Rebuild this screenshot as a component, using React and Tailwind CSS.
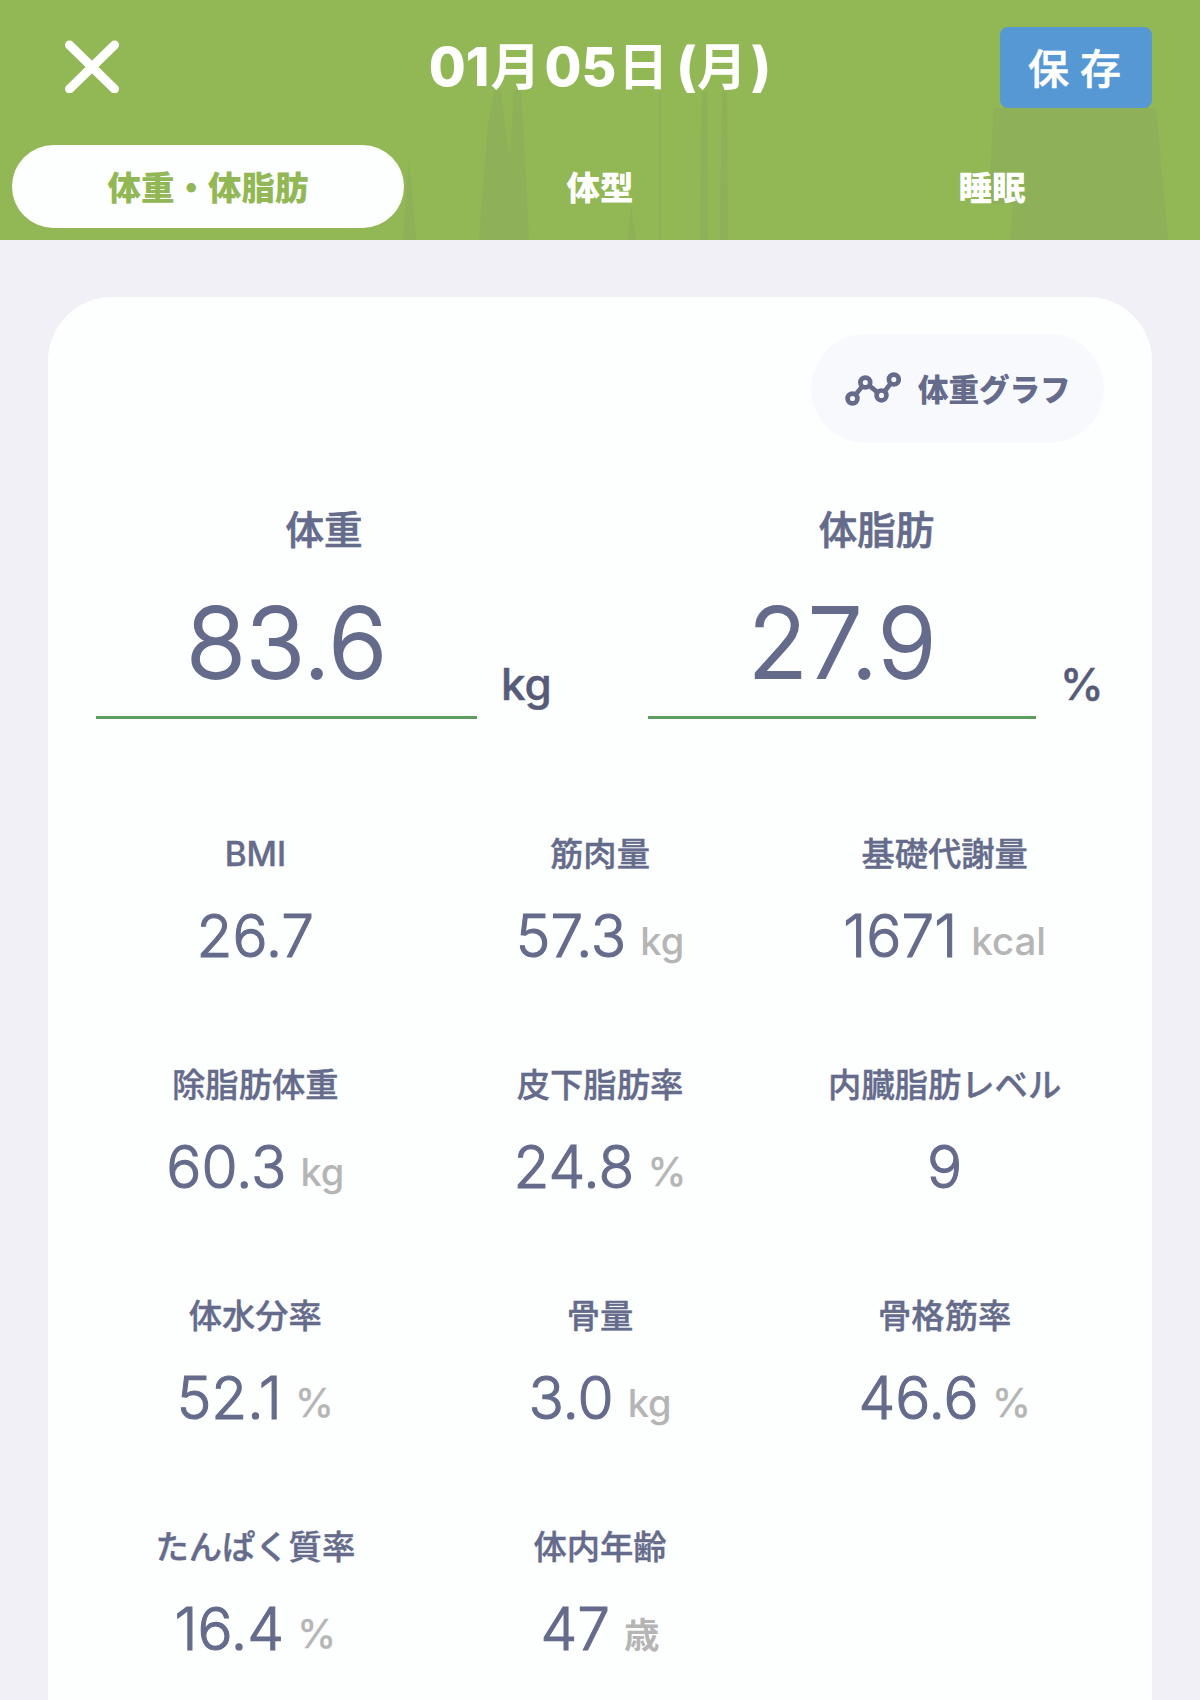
const metrics = [
  { label: "BMI", value: "26.7" },
  { label: "筋肉量", value: "57.3", unit: "kg" },
  { label: "基礎代謝量", value: "1671", unit: "kcal" },
  { label: "除脂肪体重", value: "60.3", unit: "kg" },
  { label: "皮下脂肪率", value: "24.8", unit: "%" },
  { label: "内臓脂肪レベル", value: "9" },
  { label: "体水分率", value: "52.1", unit: "%" },
  { label: "骨量", value: "3.0", unit: "kg" },
  { label: "骨格筋率", value: "46.6", unit: "%" },
  { label: "たんぱく質率", value: "16.4", unit: "%" },
  { label: "体内年齢", value: "47", unit: "歳" },
]

const tabs = ["体重・体脂肪", "体型", "睡眠"]

const unitStyles = {
  kg: "text-[38px] font-medium",
  kcal: "text-[38.5px] font-medium",
  "%": "text-[40px] font-normal [-webkit-text-stroke:0.4px] -ml-px",
  歳: "text-[35.5px] font-bold",
}

function CloseIcon() {
  return (
    <svg width="56" height="54" viewBox="0 0 56 54" fill="none" stroke="#fff" strokeWidth="9" strokeLinecap="round">
      <path d="M4.5 6 49.5 50M49.5 6 4.5 50" />
    </svg>
  )
}

function GraphIcon() {
  return (
    <svg width="56" height="34" viewBox="0 0 56 34" fill="none" stroke="#656b8b" strokeWidth="4.7">
      <circle cx="7.5" cy="26.5" r="4.9" />
      <circle cx="20.3" cy="10.5" r="4.9" />
      <circle cx="36.5" cy="23.4" r="4.9" />
      <circle cx="48.8" cy="7.5" r="4.9" />
      <path d="M10.6 22.6 17.2 14.4M24.2 13.6 32.6 20.3M39.6 19.5 45.7 11.4" />
    </svg>
  )
}

function HeaderTexture() {
  return (
    <svg className="absolute inset-0" width="1200" height="240" fill="#7f9c66" fillOpacity="0.25">
      <path d="M495 90 488 125 479 240H529L521 90H514L510 160 500 90Z" />
      <path d="M409 158 403 240H416ZM631 205 628 240H636ZM659 92H661V240H659ZM702 92H707L708 240H700ZM722 92H727L728 240H720Z" />
      <path d="M994 108H1156L1168 240H1010L1013 204H988Z" />
    </svg>
  )
}

function Header() {
  return (
    <header className="relative h-[240px] bg-[#92b755] text-white">
      <HeaderTexture />
      <div className="relative grid h-[145px] grid-cols-[1fr_auto_1fr] items-start px-12">
        <button className="mt-[39px] ml-[17px] justify-self-start">
          <CloseIcon />
        </button>
        <h1 className="mt-[35px] flex text-[53.5px] leading-[64px] font-extrabold whitespace-nowrap">
          <span>01</span>
          <span className="ml-px text-[50px] font-bold">月</span>
          <span className="ml-1">05</span>
          <span className="ml-0.5 text-[50px] font-bold">日</span>
          <span className="ml-2">(</span>
          <span className="text-[50px] font-bold">月</span>
          <span className="ml-1">)</span>
        </h1>
        <button className="mt-[27px] h-[81px] w-[152px] justify-self-end rounded-lg bg-[#5598d3] pl-2 text-[41px] leading-[84px] font-medium tracking-[11px] [-webkit-text-stroke:0.6px]">
          保存
        </button>
      </div>
      <nav className="relative grid grid-cols-3 px-3">
        {tabs.map((tab, i) => (
          <button
            key={tab}
            className={`h-[83px] rounded-full pt-1 text-[33.5px] font-black ${i === 0 ? "bg-[#fdfefe] text-[#92b755]" : "text-white"}`}
          >
            {tab}
          </button>
        ))}
      </nav>
    </header>
  )
}

function MainMetric({ label, value, unit, className, labelClass }) {
  return (
    <div className={`flex ${className}`}>
      <div className="flex grow flex-col items-center border-b-[3px] border-[#5c9c5e]">
        <span className={`text-[38.5px] leading-[52px] font-medium [-webkit-text-stroke:0.7px] ${labelClass}`}>{label}</span>
        <span className="mt-[27px] h-[143px] text-[98px] leading-[120px] font-light [-webkit-text-stroke:1.8px]">{value}</span>
      </div>
      <span className="ml-6 w-[52px] self-end pb-[10px] text-[44px] leading-[50px] font-medium text-[#555b78] [-webkit-text-stroke:0.5px]">{unit}</span>
    </div>
  )
}

function Metric({ label, value, unit }) {
  return (
    <div className="flex h-[231px] flex-col items-center">
      <span className="text-[33.3px] leading-[44px] font-medium [-webkit-text-stroke:0.4px]">{label}</span>
      <div className="mt-[25px] flex items-baseline gap-[14px] leading-[70px]">
        <span className="text-[58.5px] font-light [-webkit-text-stroke:1.1px]">{value}</span>
        {unit && <span className={`-translate-y-0.5 text-[#b5b5b5] ${unitStyles[unit]}`}>{unit}</span>}
      </div>
    </div>
  )
}

export default function App() {
  return (
    <div className="h-[1700px] w-[1200px] overflow-hidden bg-[#f0f0f6] font-[Inter,'Noto_Sans_CJK_JP',sans-serif] text-[#656b8b]">
      <Header />
      <main className="mx-12 mt-[57px] h-[1500px] rounded-t-[64px] bg-[#fdfefe] pt-[37px]">
        <div className="flex justify-end pr-12">
          <button className="flex h-[109px] w-[293px] items-center rounded-[56px] bg-[#f8f9fd] pl-[34px] text-[30.5px] font-black">
            <GraphIcon />
            <span className="ml-[17px] pt-0.5">体重グラフ</span>
          </button>
        </div>
        <section className="mt-[61px] flex h-[215px] pr-[40px] pl-12">
          <MainMetric label="体重" value="83.6" unit="kg" className="w-[457px]" labelClass="ml-[75px]" />
          <MainMetric label="体脂肪" value="27.9" unit="%" className="ml-[95px] w-[464px]" labelClass="ml-[69px]" />
        </section>
        <section className="mt-[113px] grid grid-cols-3 px-[35px]">
          {metrics.map((m) => (
            <Metric key={m.label} {...m} />
          ))}
        </section>
      </main>
    </div>
  )
}
